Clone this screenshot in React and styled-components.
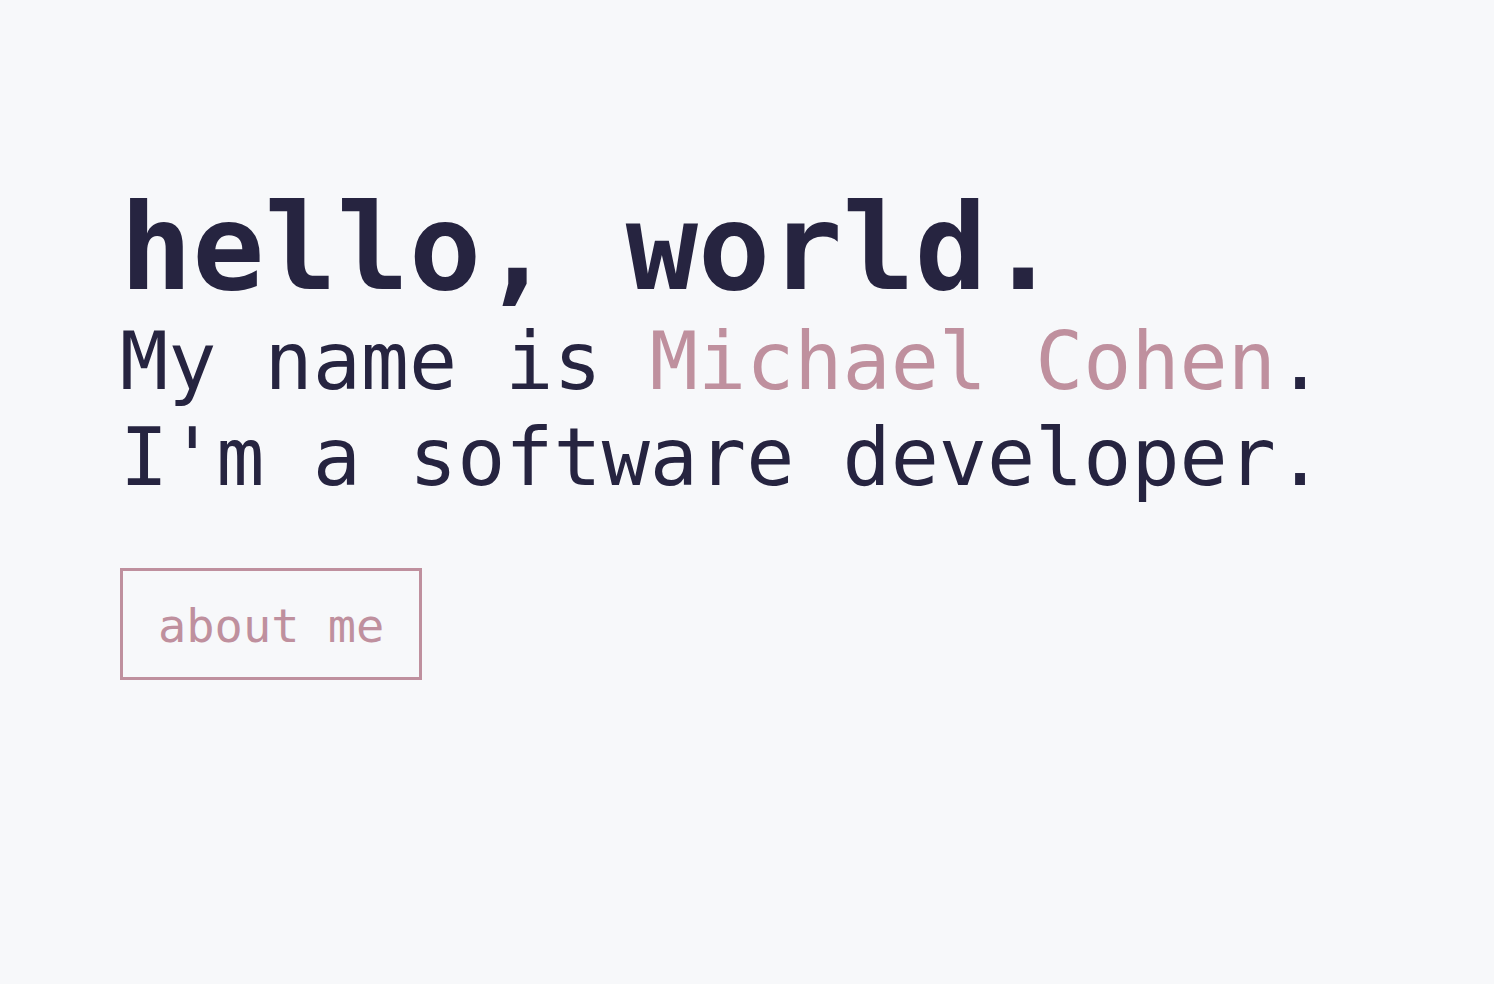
import React from 'react';
import styled, {createGlobalStyle} from "styled-components"

const GlobalStyle = createGlobalStyle`
    html, body{
        margin:0;
        padding:0;
        background-color:#f7f8fa;
    }
    body{
        font-family:"DejaVu Sans Mono","Liberation Mono",monospace;
        color:#262440;
    }
`

export default function App() {
    return (
        <>
            <GlobalStyle/>
            <Hero>
                <Title>hello, world.</Title>
                <Intro>
                    My name is <Name>Michael Cohen</Name>.<br/>
                    I'm a software developer.
                </Intro>
                <AboutButton>about me</AboutButton>
            </Hero>
        </>
    )
}

const Hero = styled.section`
    display:flex;
    flex-direction:column;
    align-items:flex-start;
    padding:188px 120px 0 120px;
    min-height:984px;
    box-sizing:border-box;
`
const Title = styled.h1`
    margin:0;
    font-size:120px;
    line-height:120px;
    font-weight:700;
    color:#262440;
`
const Intro = styled.p`
    margin:6px 0 0 0;
    font-size:80px;
    line-height:96px;
    font-weight:400;
    color:#262440;
    white-space:nowrap;
`
const Name = styled.span`
    color:#bf909e;
`
const AboutButton = styled.button`
    margin-top:62px;
    background:transparent;
    border:3px solid #bf909e;
    color:#bf909e;
    font-family:inherit;
    font-size:47px;
    line-height:47px;
    padding:31px 35px 28px 35px;
    cursor:pointer;
`
